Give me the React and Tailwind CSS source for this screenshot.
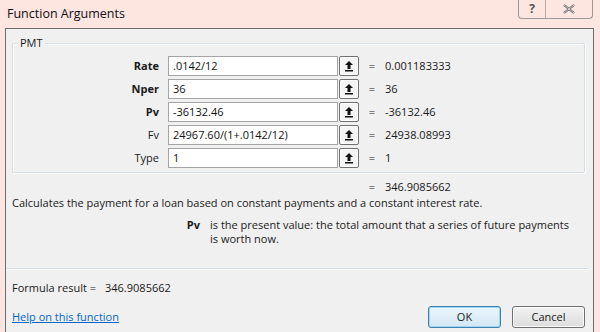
import React from "react";

const ARGS = [
  { name: "Rate", value: ".0142/12", result: "0.001183333", bold: true },
  { name: "Nper", value: "36", result: "36", bold: true },
  { name: "Pv", value: "-36132.46", result: "-36132.46", bold: true },
  { name: "Fv", value: "24967.60/(1+.0142/12)", result: "24938.08993", bold: false },
  { name: "Type", value: "1", result: "1", bold: false },
];

function RefButton() {
  return (
    <div className="w-[20px] h-[20px] border border-[#707070] bg-[#f4f4f4] rounded-[2px] flex items-center justify-center shadow-[inset_0_0_0_1px_#fff]">
      <svg width="10" height="12" viewBox="0 0 10 12">
        <path d="M5 1 L9 5 H6.5 V9 H3.5 V5 H1 Z" fill="#111" />
        <rect x="1" y="10" width="8" height="1.5" fill="#111" />
      </svg>
    </div>
  );
}

export default function App() {
  return (
    <div
      className="w-[600px] h-[332px] overflow-hidden bg-[#fde5e0] flex flex-col text-[11px] text-[#1a1a1a]"
      style={{ fontFamily: '"Open Sans", "Noto Sans", sans-serif' }}
    >
      {/* title bar */}
      <div className="h-[28px] shrink-0 flex items-start justify-between pl-[7px] pr-[7px]">
        <div className="text-[12.5px] text-[#111] pt-[5px] leading-[18px]">Function Arguments</div>
        <div className="flex h-[19px] border border-t-0 border-[#9a9a9a] rounded-b-[4px] overflow-hidden bg-[#fde5e0]">
          <div className="w-[27px] flex items-center justify-center border-r border-[#b9a9a6] text-[12px] text-[#555] font-bold">?</div>
          <div className="w-[46px] flex items-center justify-center">
            <svg width="12" height="10" viewBox="0 0 12 10">
              <path d="M1 1 L11 9 M11 1 L1 9" stroke="#555" strokeWidth="2.2" fill="none" />
              <path d="M1 1 L11 9 M11 1 L1 9" stroke="#f3f3f3" strokeWidth="0.8" fill="none" />
            </svg>
          </div>
        </div>
      </div>

      {/* client area */}
      <div className="ml-[5px] mr-[6px] flex-1 bg-[#f0f0f0] border border-b-0 border-[#6e6e6e] flex flex-col px-[6px] pt-[14px]">
        {/* fieldset */}
        <div className="relative border border-[#d5dfe5] shadow-[inset_1px_1px_0_#fff,1px_1px_0_#fff] rounded-[2px] h-[130px] mr-[2px] shrink-0">
          <div className="absolute left-[5px] top-[-8px] bg-[#f0f0f0] px-[2px] leading-[14px]">PMT</div>
          <div className="flex flex-col gap-[3px] pt-[12px]">
            {ARGS.map((a) => (
              <div key={a.name} className="flex items-center h-[20px]">
                <div className={`w-[146px] text-right ${a.bold ? "font-bold" : ""}`}>{a.name}</div>
                <div className="ml-[9px] w-[170px] h-[20px] border border-[#a5a5a5] bg-white px-[4px] flex items-center text-[#111]">
                  {a.value}
                </div>
                <div className="ml-[1px]">
                  <RefButton />
                </div>
                <div className="w-[26px] text-center">=</div>
                <div>{a.result}</div>
              </div>
            ))}
          </div>
        </div>

        <div className="flex h-[14px] mt-[7px] leading-[14px] shrink-0">
          <div className="w-[347px]" />
          <div className="w-[26px] text-center">=</div>
          <div>346.9085662</div>
        </div>
        <div className="leading-[14px] mt-[2px] shrink-0">
          Calculates the payment for a loan based on constant payments and a constant interest rate.
        </div>
        <div className="flex mt-[8px] leading-[14px] shrink-0">
          <div className="w-[198px] text-right font-bold pr-[10px]">Pv</div>
          <div className="w-[364px]">
            is the present value: the total amount that a series of future payments is worth now.
          </div>
        </div>

        <div className="mt-auto border-t border-[#d5dfe5] shadow-[0_1px_0_#fff] ml-[-6px] mr-[-1px]" />
        <div className="flex items-start justify-between h-[63px] shrink-0">
          <div className="flex flex-col">
            <div className="mt-[12px] leading-[14px] flex">
              <span className="w-[93px]">Formula result =</span>
              <span>346.9085662</span>
            </div>
            <a className="mt-[15px] leading-[14px] text-[#0066cc] underline">Help on this function</a>
          </div>
          <div className="flex gap-[11px] mt-[37px] mr-[2px]">
            <button className="w-[73px] h-[22px] rounded-[3px] border border-[#3c7fb1] bg-gradient-to-b from-[#eaf6fd] to-[#d3e7f4] shadow-[inset_0_0_0_1px_#9fd5f6] text-[11px] leading-[18px]">
              OK
            </button>
            <button className="w-[73px] h-[22px] rounded-[3px] border border-[#707070] bg-gradient-to-b from-[#f2f2f2] to-[#dddddd] shadow-[inset_0_0_0_1px_#fafafa] text-[11px] leading-[18px]">
              Cancel
            </button>
          </div>
        </div>
      </div>
    </div>
  );
}
